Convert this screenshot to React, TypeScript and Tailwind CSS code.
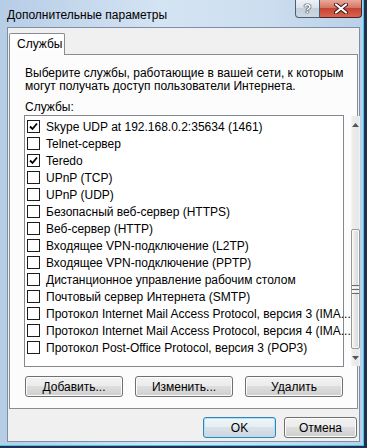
import React from "react";

const items: { t: string; c?: boolean }[] = [
  { t: "Skype UDP at 192.168.0.2:35634 (1461)", c: true },
  { t: "Telnet-сервер" },
  { t: "Teredo", c: true },
  { t: "UPnP (TCP)" },
  { t: "UPnP (UDP)" },
  { t: "Безопасный веб-сервер (HTTPS)" },
  { t: "Веб-сервер (HTTP)" },
  { t: "Входящее VPN-подключение (L2TP)" },
  { t: "Входящее VPN-подключение (PPTP)" },
  { t: "Дистанционное управление рабочим столом" },
  { t: "Почтовый сервер Интернета (SMTP)" },
  { t: "Протокол Internet Mail Access Protocol, версия 3 (IMA..." },
  { t: "Протокол Internet Mail Access Protocol, версия 4 (IMA..." },
  { t: "Протокол Post-Office Protocol, версия 3 (POP3)" },
];

function Checkbox({ checked }: { checked?: boolean }) {
  return (
    <div className="w-[13px] h-[13px] border border-[#1c1c1c] bg-white shrink-0 flex items-center justify-center">
      {checked && (
        <svg width="11" height="11" viewBox="0 0 11 11">
          <polyline points="2,5.5 4.5,8 9,2.5" fill="none" stroke="#000" strokeWidth="1.8" />
        </svg>
      )}
    </div>
  );
}

function Btn({ children, def, w }: { children: React.ReactNode; def?: boolean; w: string }) {
  return (
    <div
      className={
        "h-[21px] flex items-center justify-center rounded-[3px] border text-[12px] text-black " +
        w +
        " " +
        (def
          ? "border-[#3c7fb1] shadow-[inset_0_0_0_1px_#a8e4fb] bg-[linear-gradient(#f0f6fa_0%,#e6eef3_49%,#d8e2e8_50%,#ccd6dc_100%)]"
          : "border-[#707070] shadow-[inset_0_0_0_1px_#fcfcfc] bg-[linear-gradient(#f2f2f2_0%,#ebebeb_49%,#dddddd_50%,#cfcfcf_100%)]")
      }
    >
      {children}
    </div>
  );
}

function Arrow({ up }: { up?: boolean }) {
  return (
    <svg width="7" height="4" viewBox="0 0 7 4">
      {up ? <polygon points="0,4 7,4 3.5,0" fill="#555" /> : <polygon points="0,0 7,0 3.5,4" fill="#555" />}
    </svg>
  );
}

export default function App() {
  return (
    <div
      className="w-[367px] h-[448px] bg-[#1e3250] overflow-hidden"
      style={{ fontFamily: '"Liberation Sans", Arial, sans-serif' }}
    >
      <div className="w-[364px] h-[446px] border-r border-b border-[#46c3ee] bg-[linear-gradient(90deg,#b6cde6_0%,#d5e4f3_45%,#cbddef_75%,#b9d0e9_100%)] flex flex-col">
        {/* Title bar */}
        <div className="h-[27px] flex items-start shrink-0">
          <div className="pl-[7px] pt-[8px] text-[12px] leading-[15px] text-black">Дополнительные параметры</div>
          <div className="ml-auto mr-[1px] flex">
            <div className="w-[25px] h-[18px] border border-t-0 border-[#4f5d70] rounded-bl-[4px] bg-[linear-gradient(#eef2f7_0%,#d9e2ec_45%,#c3cfdc_50%,#cdd8e4_100%)] flex items-center justify-center">
              <span className="text-white font-bold text-[13px] leading-none [text-shadow:0_0_1px_#222,0_0_1px_#222,0_0_1px_#222]">?</span>
            </div>
            <div className="w-[42px] h-[18px] border border-l-0 border-t-0 border-[#4a2322] rounded-br-[4px] bg-[linear-gradient(#eaa99a_0%,#d67766_45%,#c44434_50%,#d9654c_100%)] flex items-center justify-center">
              <svg width="14" height="11" viewBox="0 0 14 11">
                <path d="M2 1.5 L12 9.5 M12 1.5 L2 9.5" stroke="#3a1a1a" strokeWidth="4" strokeLinecap="round" />
                <path d="M2 1.5 L12 9.5 M12 1.5 L2 9.5" stroke="#fff" strokeWidth="2.2" strokeLinecap="round" />
              </svg>
            </div>
          </div>
        </div>

        {/* Client area */}
        <div className="ml-[7px] w-[353px] h-[415px] border border-[#7f8fa3] bg-[#f0f0f0] flex flex-col shrink-0">
          <div className="pl-[1px] pt-[5px]">
            {/* Tab header */}
            <div className="relative z-10 -mb-px w-[56px] h-[22px] border border-b-0 border-[#898c95] rounded-t-[2px] bg-[linear-gradient(#ffffff,#fcfcfc)] pl-[7px] pt-[3px] text-[12px] leading-[15px] text-black">
              Службы
            </div>
            {/* Panel */}
            <div className="w-[349px] h-[355px] border border-[#898c95] bg-[#fcfcfc] pl-[14px] flex flex-col">
              <div className="mt-[12px] pl-px text-[12px] leading-[13px] text-black">
                <div>Выберите службы, работающие в вашей сети, к которым</div>
                <div>могут получать доступ пользователи Интернета.</div>
              </div>
              <div className="mt-[8px] pl-px text-[12px] leading-[13px] text-black">Службы:</div>
              {/* List */}
              <div className="mt-[1px] w-[320px] h-[252px] border border-[#828790] bg-white flex">
                <div className="flex-1 pt-[2px] pl-[2px] flex flex-col">
                  {items.map((it, i) => (
                    <div key={i} className="h-[17px] flex items-center gap-[6px] text-[12px] text-black whitespace-nowrap">
                      <Checkbox checked={it.c} />
                      <span>{it.t}</span>
                    </div>
                  ))}
                </div>
                {/* Scrollbar */}
                <div className="w-[17px] flex flex-col bg-[linear-gradient(90deg,#f7f7f7_0%,#ececec_20%,#e8e8e8_80%,#f2f2f2_100%)]">
                  <div className="h-[17px] flex items-center justify-center">
                    <Arrow up />
                  </div>
                  <div className="flex-1 flex flex-col">
                    <div className="h-[96px]" />
                    <div className="flex-1 rounded-[2px] border border-[#979797] bg-[linear-gradient(90deg,#f6f6f6_0%,#e6e6e6_45%,#d4d4d4_100%)] shadow-[inset_0_0_0_1px_#fafafa] flex flex-col items-center justify-center gap-[1px]">
                      <div className="w-[7px] h-px bg-[#6b6b6b]" />
                      <div className="w-[7px] h-px bg-[#fafafa]" />
                      <div className="w-[7px] h-px bg-[#6b6b6b]" />
                      <div className="w-[7px] h-px bg-[#fafafa]" />
                      <div className="w-[7px] h-px bg-[#6b6b6b]" />
                    </div>
                  </div>
                  <div className="h-[17px] flex items-center justify-center">
                    <Arrow />
                  </div>
                </div>
              </div>
              {/* Buttons */}
              <div className="mt-[9px] ml-px w-[318px] flex justify-between">
                <Btn w="w-[98px]">Добавить...</Btn>
                <Btn w="w-[98px]">Изменить...</Btn>
                <Btn w="w-[98px]">Удалить</Btn>
              </div>
            </div>
          </div>
          {/* OK / Cancel */}
          <div className="mt-[8px] pr-[2px] flex justify-end gap-[8px]">
            <Btn w="w-[73px]" def>
              OK
            </Btn>
            <Btn w="w-[73px]">Отмена</Btn>
          </div>
        </div>
      </div>
    </div>
  );
}
